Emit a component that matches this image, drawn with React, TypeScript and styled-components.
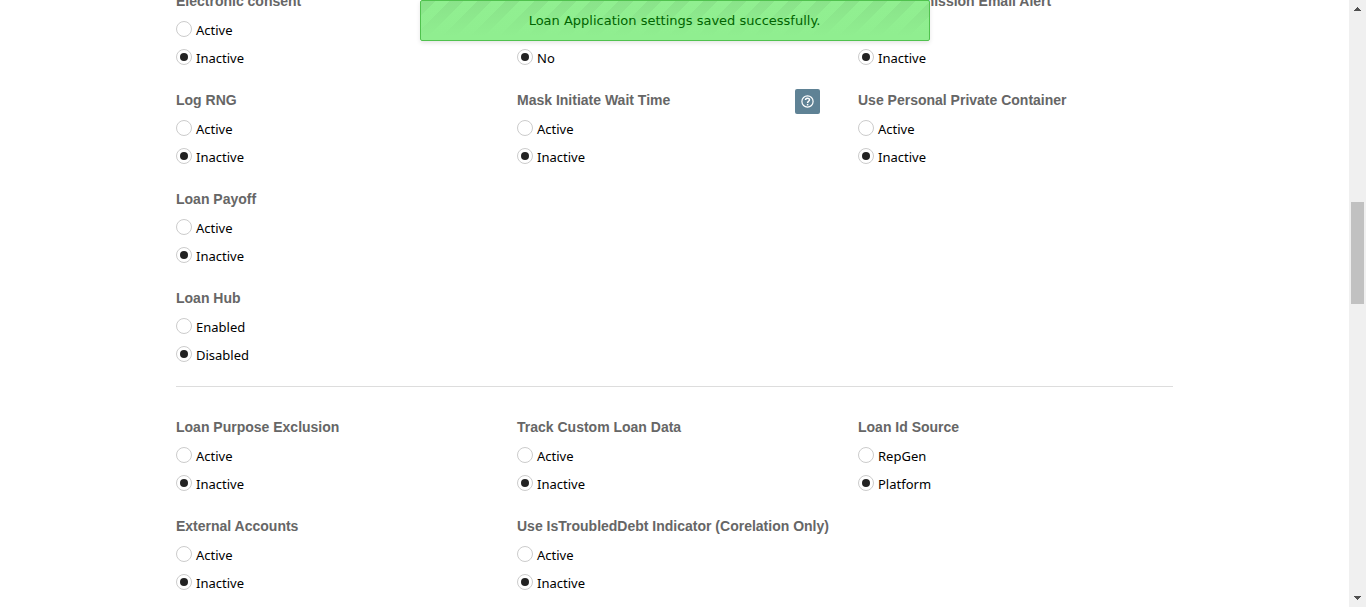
import React from 'react';
import styled, { createGlobalStyle } from 'styled-components';

const GlobalStyle = createGlobalStyle`
  *, *::before, *::after { box-sizing: border-box; }
  body {
    margin: 0;
    background: #fff;
    color: #000;
    font-family: "Noto Sans", Tahoma, sans-serif;
    font-size: 13px;
  }
`;

const Window = styled.div`
  display: flex;
  height: 100vh;
  overflow: hidden;
`;

const Viewport = styled.main`
  position: relative;
  flex: 1;
  min-width: 0;
  overflow: hidden;
`;

const Page = styled.div`
  width: 100%;
  max-width: 997px;
  margin: -13px auto 0;
`;

const SettingsGrid = styled.section`
  display: grid;
  grid-template-columns: repeat(3, minmax(0, 1fr));
  column-gap: 26px;
  row-gap: 14px;
`;

const Divider = styled.hr`
  margin: 17px 0 26px;
  border: 0;
  border-top: 1px solid #ddd;
`;

const Setting = styled.fieldset<{ $column: number }>`
  grid-column: ${(p) => p.$column};
  min-width: 0;
  margin: 0;
  padding: 0;
  border: 0;
`;

const Title = styled.legend`
  display: block;
  width: 100%;
  height: 29px;
  padding: 0;
  color: #666;
  font-family: "Liberation Sans", Arial, sans-serif;
  font-size: 14px;
  font-weight: 700;
  line-height: 28px;
  white-space: nowrap;
`;

const TitleRow = styled.span`
  display: flex;
  align-items: flex-start;
  justify-content: space-between;
  padding-right: 12px;
`;

const HelpButton = styled.button`
  display: flex;
  flex: none;
  align-items: center;
  justify-content: center;
  width: 25px;
  height: 25px;
  margin-top: 3px;
  padding: 0;
  border: 0;
  border-radius: 2px;
  background: #5f8295;
  color: #fff;
`;

const Option = styled.label`
  display: flex;
  align-items: center;
  gap: 4px;
  height: 28px;
  line-height: 28px;
`;

const Radio = styled.input`
  appearance: none;
  display: grid;
  place-items: center;
  flex: none;
  width: 16px;
  height: 16px;
  margin: 0 0 2px;
  border: 1px solid #ccc;
  border-radius: 50%;
  background: #fff;

  &:checked::before {
    content: "";
    width: 8px;
    height: 8px;
    border-radius: 50%;
    background: #222;
  }
`;

const Toast = styled.div`
  position: absolute;
  z-index: 2;
  top: 0;
  left: 50%;
  width: 510px;
  max-width: 100%;
  transform: translateX(-50%);
  padding: 10px;
  border: 1px solid #50c24e;
  border-radius: 2px;
  background:
    linear-gradient(to bottom, rgba(144, 238, 144, 0), #90ee90 90%),
    repeating-linear-gradient(135deg, #8ae38a 0 10px, #91ef91 10px 20px);
  box-shadow: 0 2px 4px rgba(0, 0, 0, 0.1);
  color: #006400;
  font-family: "DejaVu Sans", Verdana, sans-serif;
  font-size: 13px;
  line-height: 19px;
  text-align: center;
`;

const Scrollbar = styled.div`
  display: flex;
  flex: none;
  flex-direction: column;
  align-items: center;
  width: 17px;
  background: #f0f0f0;
`;

const Arrow = styled.svg`
  display: block;
  width: 17px;
  height: 17px;
`;

const Track = styled.div`
  display: grid;
  flex: 1;
  grid-template-rows: 185fr 102fr 286fr;
`;

const Thumb = styled.div`
  grid-row: 2;
  width: 13px;
  background: #c1c1c1;
`;

type SettingData = {
  id: string;
  title?: string;
  column: number;
  options: [string, string];
  help?: boolean;
};

const STATUS: [string, string] = ['Active', 'Inactive'];

const general: SettingData[] = [
  { id: 'consent', title: 'Electronic consent', column: 1, options: STATUS },
  { id: 'choice', column: 2, options: ['Yes', 'No'] },
  { id: 'alert', title: 'Loan Submission Email Alert', column: 3, options: STATUS },
  { id: 'rng', title: 'Log RNG', column: 1, options: STATUS },
  { id: 'wait', title: 'Mask Initiate Wait Time', column: 2, options: STATUS, help: true },
  { id: 'container', title: 'Use Personal Private Container', column: 3, options: STATUS },
  { id: 'payoff', title: 'Loan Payoff', column: 1, options: STATUS },
  { id: 'hub', title: 'Loan Hub', column: 1, options: ['Enabled', 'Disabled'] },
];

const data: SettingData[] = [
  { id: 'purpose', title: 'Loan Purpose Exclusion', column: 1, options: STATUS },
  { id: 'track', title: 'Track Custom Loan Data', column: 2, options: STATUS },
  { id: 'source', title: 'Loan Id Source', column: 3, options: ['RepGen', 'Platform'] },
  { id: 'external', title: 'External Accounts', column: 1, options: STATUS },
  {
    id: 'troubled',
    title: 'Use IsTroubledDebt Indicator (Corelation Only)',
    column: 2,
    options: STATUS,
  },
];

function RadioSetting({ id, title, column, options, help }: SettingData) {
  return (
    <Setting $column={column}>
      <Title>
        <TitleRow>
          {title}
          {help && (
            <HelpButton type="button" aria-label={`Help: ${title}`}>
              <svg width="13" height="13" viewBox="0 0 13 13" fill="none" stroke="currentColor">
                <circle cx="6.5" cy="6.5" r="5.6" strokeWidth="1.2" />
                <path d="M4.5 5C4.5 2.6 8.5 2.6 8.5 4.8C8.5 6.3 6.6 6.2 6.6 8" strokeWidth="1.5" />
                <path d="M6.6 8.9v1.5" strokeWidth="1.5" />
              </svg>
            </HelpButton>
          )}
        </TitleRow>
      </Title>
      {options.map((label, i) => (
        <Option key={label}>
          <Radio type="radio" name={id} defaultChecked={i === 1} />
          {label}
        </Option>
      ))}
    </Setting>
  );
}

export default function App() {
  return (
    <>
      <GlobalStyle />
      <Window>
        <Viewport>
          <Page>
            <SettingsGrid>
              {general.map((s) => (
                <RadioSetting key={s.id} {...s} />
              ))}
            </SettingsGrid>
            <Divider />
            <SettingsGrid>
              {data.map((s) => (
                <RadioSetting key={s.id} {...s} />
              ))}
            </SettingsGrid>
          </Page>
          <Toast role="status">Loan Application settings saved successfully.</Toast>
        </Viewport>
        <Scrollbar aria-hidden="true">
          <Arrow viewBox="0 0 17 17" fill="#505050" shapeRendering="crispEdges">
            <path d="M5 11v-1h1v-1h1v-1h1v-1h1v1h1v1h1v1h1v1z" />
          </Arrow>
          <Track>
            <Thumb />
          </Track>
          <Arrow viewBox="0 0 17 17" fill="#505050" shapeRendering="crispEdges">
            <path d="M5 6v1h1v1h1v1h1v1h1v-1h1v-1h1v-1h1v-1z" />
          </Arrow>
        </Scrollbar>
      </Window>
    </>
  );
}
